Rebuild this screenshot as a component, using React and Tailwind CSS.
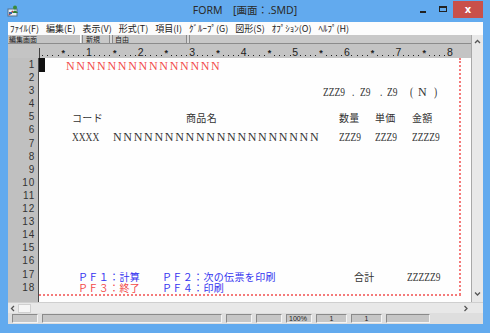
const jp = "font-['Noto_Sans_CJK_JP',sans-serif]";

const menus = ['ﾌｧｲﾙ(F)', '編集(E)', '表示(V)', '形式(T)', '項目(I)', 'ｸﾞﾙｰﾌﾟ(G)', '図形(S)', 'ｵﾌﾟｼｮﾝ(O)', 'ﾍﾙﾌﾟ(H)'];
const rulerCols = Array.from({ length: 80 }, (_, i) => i + 1);
const lineNos = Array.from({ length: 18 }, (_, i) => i + 1);

function Chevron({ dir }) {
  const d = {
    up: 'M1 4 L3.5 1.5 L6 4',
    down: 'M1 1.5 L3.5 4 L6 1.5',
    left: 'M4 1 L1.5 3.5 L4 6',
    right: 'M1.5 1 L4 3.5 L1.5 6',
  }[dir];
  return (
    <svg width="7" height="7" viewBox="0 0 7 7">
      <path d={d} fill="none" stroke="#555" strokeWidth="1.3" />
    </svg>
  );
}

function AppIcon() {
  return (
    <svg width="13" height="13" viewBox="0 0 13 13">
      <rect x="1" y="5" width="9" height="7" fill="#e8eef2" stroke="#56708a" strokeWidth="1" />
      <circle cx="8" cy="3.5" r="2" fill="#3a8a3a" />
      <path d="M5 9 Q8 4 11 9 Z" fill="#2f7d32" />
      <path d="M2 11 L6 7" stroke="#c04040" strokeWidth="1.4" />
      <rect x="2" y="8" width="3" height="2" fill="#3464a8" />
    </svg>
  );
}

// half-width field text (ZZZ9, XXXX)
function Hw({ x, y, children }) {
  return (
    <span
      className="absolute inline-block origin-left scale-x-[0.82] font-['Liberation_Serif',serif] text-[11.5px] leading-[14px] text-[#333] whitespace-pre"
      style={{ left: x, top: y }}
    >
      {children}
    </span>
  );
}

function Jp({ x, y, color, children }) {
  return (
    <span
      className={`absolute ${jp} text-[10px] leading-[12px] tracking-[0.35px] whitespace-pre ${color}`}
      style={{ left: x, top: y }}
    >
      {children}
    </span>
  );
}

function Ns({ x, y, n, color }) {
  return (
    <span
      className={`absolute font-['Liberation_Serif',serif] text-[12px] leading-[14px] tracking-[1.7px] whitespace-pre ${color}`}
      style={{ left: x, top: y }}
    >
      {'N'.repeat(n)}
    </span>
  );
}

function Panel({ className, children }) {
  return (
    <div
      className={`h-[9px] bg-[#c6c6c6] border border-t-[#8a8a8a] border-l-[#8a8a8a] border-b-[#f4f4f4] border-r-[#f4f4f4] flex items-center ${className}`}
    >
      {children}
    </div>
  );
}

export default function App() {
  return (
    <div className="w-[490px] h-[333px] bg-[#62aaee] flex flex-col overflow-hidden">
      {/* title bar */}
      <div className="h-[22px] relative flex items-center justify-center shrink-0">
        <div className="absolute left-[7px] top-[4px]">
          <AppIcon />
        </div>
        <span className="font-['Noto_Sans','Noto_Sans_CJK_JP',sans-serif] text-[10.5px] text-[#2a2a2a] whitespace-pre">
          FORM　[画面：.SMD]
        </span>
        <div className="absolute right-[7px] top-[1px] flex items-start">
          <div className="w-[20px] h-[17px] flex items-center justify-center">
            <div className="w-[6px] h-[2px] bg-[#222] mt-[5px]" />
          </div>
          <div className="w-[20px] h-[17px] flex items-center justify-center">
            <div className="w-[8px] h-[6px] border border-[#222] border-t-2 -mt-[2px]" />
          </div>
          <div className="w-[30px] h-[17px] bg-[#c9504a] flex items-center justify-center text-white font-['DejaVu_Sans',sans-serif] text-[10px] font-bold leading-none">
            x
          </div>
        </div>
      </div>

      <div className="flex-1 ml-[8px] mr-[7px] mb-[9px] flex flex-col bg-[#f0f0f0] min-h-0">
        {/* menu */}
        <div className={`h-[13px] bg-[#fcfcfc] flex items-center gap-[7px] pl-[2px] ${jp} text-[9px] text-[#222] leading-none shrink-0`}>
          {menus.map((m) => (
            <span key={m}>{m}</span>
          ))}
        </div>

        <div className="flex-1 flex min-h-0">
          <div className="flex-1 flex flex-col min-w-0">
            {/* toolbar panels */}
            <div className={`h-[8px] bg-[#d6d6d6] flex ${jp} text-[7px] leading-[8px] text-[#222] shrink-0`}>
              <div className="w-[73px] bg-[#c4c4c4] border-r border-[#fafafa] pl-[1px]">編集画面</div>
              <div className="w-[28px] bg-[#c8c8c8] border-x border-[#8a8a8a] pl-[3px] ml-[1px]">新規</div>
              <div className="w-[75px] bg-[#c8c8c8] border-x border-[#8a8a8a] pl-[2px] ml-[2px]">自由</div>
              <div className="flex-1 bg-[#c8c8c8] border-l border-[#8a8a8a] ml-[2px]" />
            </div>

            {/* ruler */}
            <div className="h-[15px] bg-[#c4c4c4] border-t border-[#8c8c8c] flex shrink-0">
              <div className="w-[31px] shrink-0" />
              <div className="flex-1 flex border-l border-[#444] mt-[4px] font-['Liberation_Sans',sans-serif] text-[#222]">
                {rulerCols.map((c) => (
                  <div key={c} className="w-[5.16px] shrink-0 flex justify-center items-end">
                    {c % 10 === 0 ? (
                      <span className="text-[10.5px] leading-[10px] mb-[1px]">{c / 10}</span>
                    ) : c % 5 === 0 ? (
                      <span className="text-[9px] leading-[9px] font-bold">*</span>
                    ) : (
                      <span className="w-[1px] h-[1px] bg-[#222] mb-[2px]" />
                    )}
                  </div>
                ))}
              </div>
            </div>

            {/* editor */}
            <div className="flex-1 flex min-h-0">
              <div className="w-[31px] bg-[#c0c0c0] border-r border-[#4a4a4a] shrink-0 font-['Liberation_Sans',sans-serif] text-[10px] text-[#333]">
                {lineNos.map((n) => (
                  <div key={n} className="h-[13.1px] leading-[13.1px] text-right pr-[3px] tracking-[0.8px]">
                    {n}
                  </div>
                ))}
              </div>

              <div className="flex-1 relative bg-[#fefefe] overflow-hidden">
                <div className="absolute left-0 top-0 w-[6px] h-[14px] bg-[#111]" />
                <div className="absolute left-[420px] top-0 h-[237px] border-l-2 border-dotted border-[#f47a7a]" />
                <div className="absolute left-0 top-[236px] w-[422px] border-t-2 border-dotted border-[#f47a7a]" />

                <Ns x={27} y={1} n={15} color="text-[#f24a4a]" />

                <Hw x={284} y={27}>ZZZ9</Hw>
                <Hw x={313} y={27}>.</Hw>
                <Hw x={321} y={27}>Z9</Hw>
                <Hw x={341} y={27}>.</Hw>
                <Hw x={348} y={27}>Z9</Hw>
                <Hw x={371} y={27}>(</Hw>
                <Ns x={379} y={27} n={1} color="text-[#333]" />
                <Hw x={395} y={27}>)</Hw>

                <Jp x={33} y={54} color="text-[#333]">コード</Jp>
                <Jp x={147} y={54} color="text-[#333]">商品名</Jp>
                <Jp x={300} y={54} color="text-[#333]">数量</Jp>
                <Jp x={336} y={54} color="text-[#333]">単価</Jp>
                <Jp x={373} y={54} color="text-[#333]">金額</Jp>

                <Hw x={33} y={72}>XXXX</Hw>
                <Ns x={74} y={72} n={20} color="text-[#333]" />
                <Hw x={300} y={72}>ZZZ9</Hw>
                <Hw x={336} y={72}>ZZZ9</Hw>
                <Hw x={373} y={72}>ZZZZ9</Hw>

                <Jp x={39} y={213} color="text-[#3434f0]">ＰＦ１：計算</Jp>
                <Jp x={123} y={213} color="text-[#3434f0]">ＰＦ２：次の伝票を印刷</Jp>
                <Jp x={315} y={213} color="text-[#333]">合計</Jp>
                <Hw x={368} y={212}>ZZZZZ9</Hw>

                <Jp x={39} y={224} color="text-[#f24a4a]">ＰＦ３：終了</Jp>
                <Jp x={123} y={224} color="text-[#3434f0]">ＰＦ４：印刷</Jp>
              </div>
            </div>
          </div>

          {/* vertical scrollbar */}
          <div className="w-[12px] bg-[#e8e8e8] border-l border-[#a8a8a8] flex flex-col justify-between items-center py-[4px] shrink-0">
            <Chevron dir="up" />
            <Chevron dir="down" />
          </div>
        </div>

        {/* horizontal scrollbar */}
        <div className="h-[11px] bg-[#e8e8e8] border-t border-[#cfcfcf] flex items-center shrink-0">
          <div className="w-[10px] flex justify-center">
            <Chevron dir="left" />
          </div>
          <div className="w-[13px] h-[9px] bg-[#f6f6f6] border border-[#d0d0d0]" />
          <div className="flex-1" />
          <div className="w-[10px] flex justify-center mr-[12px]">
            <Chevron dir="right" />
          </div>
        </div>

        {/* status bar */}
        <div className="h-[11px] bg-[#dedede] flex items-center pl-[4px] gap-[4px] font-['Liberation_Sans',sans-serif] text-[7px] text-[#222] leading-none shrink-0">
          <Panel className="w-[26px]" />
          <Panel className="w-[180px]" />
          <Panel className="w-[26px]" />
          <Panel className="w-[26px]" />
          <Panel className="w-[26px] pl-[2px]">100%</Panel>
          <Panel className="w-[31px] justify-center">1</Panel>
          <Panel className="w-[31px] justify-center">1</Panel>
          <Panel className="w-[44px]" />
        </div>
      </div>
    </div>
  );
}
